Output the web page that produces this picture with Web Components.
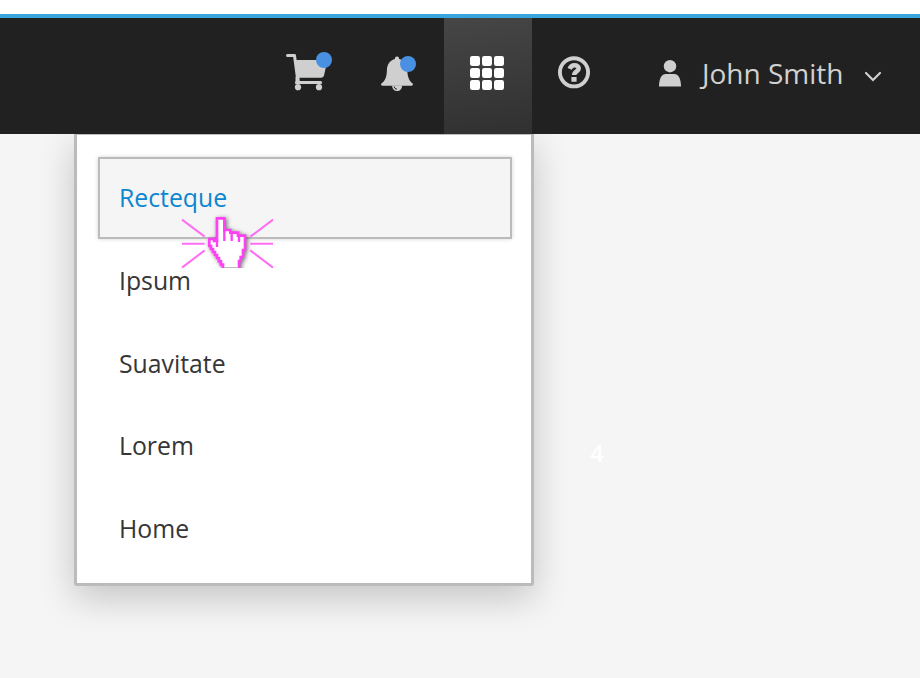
<!DOCTYPE html>
<html lang="en">
<head>
<meta charset="utf-8">
<title>Application menu</title>
<style>
html, body { margin: 0; height: 678px; overflow: hidden; }
body { background: #f5f5f5; font-family: "Open Sans", "Noto Sans", sans-serif; }
</style>
</head>
<body>
<app-shell>
  <app-masthead slot="header">
    <mast-item icon="cart" style="--w:88px"></mast-item>
    <mast-item icon="bell" style="--w:88px"></mast-item>
    <mast-item icon="grid" active style="--w:88px"></mast-item>
    <mast-item icon="help" style="--w:84px"></mast-item>
    <user-menu>John Smith</user-menu>
  </app-masthead>
  <launcher-menu>
    <launcher-item selected>Recteque</launcher-item>
    <launcher-item>Ipsum</launcher-item>
    <launcher-item>Suavitate</launcher-item>
    <launcher-item>Lorem</launcher-item>
    <launcher-item>Home</launcher-item>
  </launcher-menu>
  <step-number slot="aside">4</step-number>
  <click-pointer slot="overlay"></click-pointer>
</app-shell>
<script>
const define = (name, html) => customElements.define(name, class extends HTMLElement {
  constructor() {
    super();
    this.attachShadow({ mode: "open" }).innerHTML = html;
  }
});

define("app-shell", `
<style>
:host { display: flex; flex-direction: column; height: 678px; position: relative; overflow: hidden; }
.content { display: flex; flex: 1; align-items: flex-start; padding-left: 74px; overflow: hidden; }
</style>
<slot name="header"></slot>
<div class="content"><slot></slot><slot name="aside"></slot></div>
<slot name="overlay"></slot>`);

define("app-masthead", `
<style>
:host { display: block; border-top: 14px solid #fff; }
nav { display: flex; height: 116px; padding-left: 268px; border-top: 4px solid #39a5dc; background: #212121; color: #d1d1d1; }
</style>
<nav><slot></slot></nav>`);

const icons = {
  cart: `<svg viewBox="268 18 88 116">
    <path d="M287.500 55.500H294.500L298 82" fill="none" stroke="#cfcfcf" stroke-width="3" stroke-linecap="round" stroke-linejoin="round"/>
    <path d="M296 60H327.500L324 75.500Q323.400 77.800 321 77.800H298.300Z" fill="#cfcfcf"/>
    <path d="M296.600 82.500H320.500" stroke="#cfcfcf" stroke-width="3.200" stroke-linecap="round"/>
    <path d="M297.500 77V84" stroke="#cfcfcf" stroke-width="4"/>
    <circle cx="298" cy="87.200" r="3.100" fill="#cfcfcf"/><circle cx="319" cy="87.200" r="3.100" fill="#cfcfcf"/>
    <circle cx="324" cy="60" r="8" fill="#4a90e2"/></svg>`,
  bell: `<svg viewBox="356 18 88 116">
    <path d="M397 56.600C398.600 56.600 399.300 57.600 399 59C404 60.300 407 64 407.300 70C407.500 77 409 80.500 412.700 83.600Q413.500 85.700 411.500 85.700H382.500Q380.500 85.700 381.300 83.600C385.500 80.500 386.700 77 386.900 70C387.200 64 390 60.300 395 59C394.700 57.600 395.400 56.600 397 56.600Z" fill="#cfcfcf"/>
    <path d="M392 85.500H402.200C402 89 400 91 397 91C394 91 392.200 89 392 85.500Z" fill="#cfcfcf"/>
    <path d="M394 86.500Q394.600 89 397 89.300" fill="none" stroke="#212121" stroke-width="1"/>
    <circle cx="408" cy="64" r="8" fill="#4a90e2"/></svg>`,
  grid: `<svg viewBox="444 18 88 116" fill="#fff">${
    [56, 68, 80].map(y => [470, 482, 494].map(x => `<rect x="${x}" y="${y}" width="10" height="10" rx="2.300"/>`).join("")).join("")
  }</svg>`,
  help: `<svg viewBox="532 18 84 116">
    <circle cx="574" cy="72.300" r="14.100" fill="none" stroke="#cfcfcf" stroke-width="3.900"/>
    <path d="M569.700 68.800C570.700 66.300 572.200 65.300 574.500 65.300C577.100 65.300 578.700 66.700 578.700 68.600C578.700 71.400 574.200 71.600 574.100 75" fill="none" stroke="#cfcfcf" stroke-width="4.600"/>
    <rect x="571.400" y="77" width="5.200" height="4.800" rx=".4" fill="#cfcfcf"/></svg>`
};
customElements.define("mast-item", class extends HTMLElement {
  connectedCallback() {
    if (this.shadowRoot) return;
    this.attachShadow({ mode: "open" }).innerHTML = `
<style>
:host { display: block; width: var(--w); height: 116px; }
:host([active]) { background: linear-gradient(172deg, #464646, #303030); }
svg { display: block; width: 100%; height: 100%; }
</style>${icons[this.getAttribute("icon")]}`;
  }
});

define("user-menu", `
<style>
:host { display: flex; align-items: center; height: 110px; padding-left: 43px; font-size: 28px; line-height: 38px; color: #d1d1d1; }
.name { margin: 0 0 0 20px; width: 143px; white-space: nowrap; }
svg { display: block; }
.chev { margin: 6px 0 0 19px; }
</style>
<svg width="23" height="27" viewBox="0 0 23 27" fill="#cfcfcf"><circle cx="11" cy="6.200" r="6.200"/><path d="M0 26.500C.1 18 3 14 6.500 14H15.500C19 14 21.900 18 22 26.500Z"/></svg>
<span class="name"><slot></slot></span>
<svg class="chev" width="18" height="12" viewBox="0 0 18 12"><path d="M2 3L9 10L16 3" fill="none" stroke="#cfcfcf" stroke-width="2.200" stroke-linecap="round"/></svg>`);

define("launcher-menu", `
<style>
:host { display: flex; flex-direction: column; box-sizing: border-box; width: 460px; height: 452px; padding: 21.500px 19px 0 21px;
  border: 3px solid #bbb; border-top-width: 1px; border-radius: 0 0 3px 3px; background: #fff; box-shadow: 0 12px 36px rgba(0,0,0,.2); }
</style><slot></slot>`);

define("launcher-item", `
<style>
:host { display: flex; align-items: center; box-sizing: border-box; width: 414px; height: 82.700px; padding: 0 0 1.200px 19px; border: 2px solid transparent; color: #363636; font-size: 24.800px; line-height: 34px; }
:host([selected]) { padding-bottom: 1.600px; border-color: #bbb; background: #f5f5f5; color: #0b86d0; box-shadow: 0 0 4px rgba(0,0,0,.18); }
</style><span><slot></slot></span>`);

define("step-number", `
<style>:host { display: block; margin: 303px 0 0 56px; color: #fff; font-size: 24px; font-weight: 600; line-height: 32px; }</style><slot></slot>`);

define("click-pointer", `
<style>
:host { display: block; position: absolute; left: 170px; top: 205px; width: 120px; height: 63px; overflow: hidden; pointer-events: none; }
svg { display: block; }
.hand { filter: drop-shadow(4px 3px 6px rgba(0,0,0,.55)); }
</style>
<svg width="120" height="75" viewBox="0 0 360 225">
  <g stroke="#ff6df5" stroke-width="6"><path d="M36 44L104 95M36 116H104M36 188L104 136M309 44L241 95M241 116H309M309 188L241 136"/></g>
  <path class="hand" d="M141 40H163V75H181V83H204V92H225V135H219V156H212V168H207V195H159V179H153V169H147V159H141V150H135V141H129V132H123V123H118V102H132V108H141Z" fill="#fff" stroke="#ff40f5" stroke-width="8"/>
  <path d="M141 102V126M163 75V108M185 83V108M207 92V111" fill="none" stroke="#ff40f5" stroke-width="7"/>
  <path d="M162 187.500H203" stroke="#bbb" stroke-width="3"/>
</svg>`);
</script>
</body>
</html>
